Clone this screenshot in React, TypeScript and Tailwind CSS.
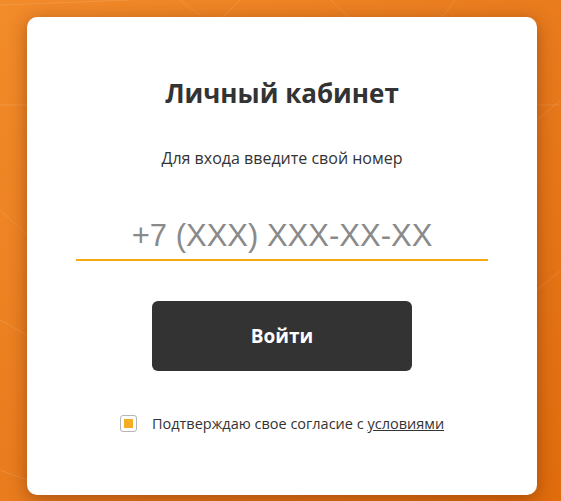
export default function App() {
  return (
    <div className="relative h-[501px] w-full overflow-hidden bg-gradient-to-br from-[#f28b2a] to-[#e06c0c] font-['Open_Sans',sans-serif]">
      <svg className="absolute inset-0 h-full w-full" viewBox="0 0 561 501" fill="none" stroke="rgba(255,255,255,0.12)" strokeWidth="1">
        <path d="M0 5 L130 0 M180 0 L200 15 M240 0 L220 20 M330 0 L350 18 M455 0 L440 20 M0 105 L561 105 M0 210 L27 235 M0 320 L27 335 M537 120 L561 100 M537 290 L561 270 M0 470 L27 480" />
      </svg>
      <div className="relative px-[24px] pl-[27px] pt-[17px]">
        <div className="flex h-[478px] w-[510px] flex-col items-center rounded-[10px] bg-white px-[49px] pt-[58px] shadow-[0_4px_18px_rgba(90,30,0,0.45)]">
          <h1 className="text-[26px] font-bold leading-[36px] text-[#333333]">Личный кабинет</h1>
          <p className="mt-[37px] text-[16px] leading-[21px] text-[#333333]">Для входа введите свой номер</p>
          <input
            className="mt-[43px] h-[47px] w-full bg-transparent text-center font-['Liberation_Sans',sans-serif] text-[31px] text-[#8a8a8a] outline-none placeholder:text-[#8a8a8a]"
            placeholder="+7 (XXX) XXX-XX-XX"
          />
          <div className="h-[2px] w-full bg-[#f5ab10]" />
          <button className="mt-[40px] h-[70px] w-[260px] rounded-[6px] bg-[#333333] text-[19px] font-bold text-white">
            Войти
          </button>
          <label className="mt-[42px] flex items-center gap-[15px] text-[14.5px] text-[#333333]">
            <span className="flex h-[17px] w-[17px] items-center justify-center rounded-[3px] border border-[#b5b5b5]">
              <span className="h-[9px] w-[9px] bg-[#f5ae23]" />
            </span>
            <span>
              Подтверждаю свое согласие с <a className="underline">условиями</a>
            </span>
          </label>
        </div>
      </div>
    </div>
  );
}
